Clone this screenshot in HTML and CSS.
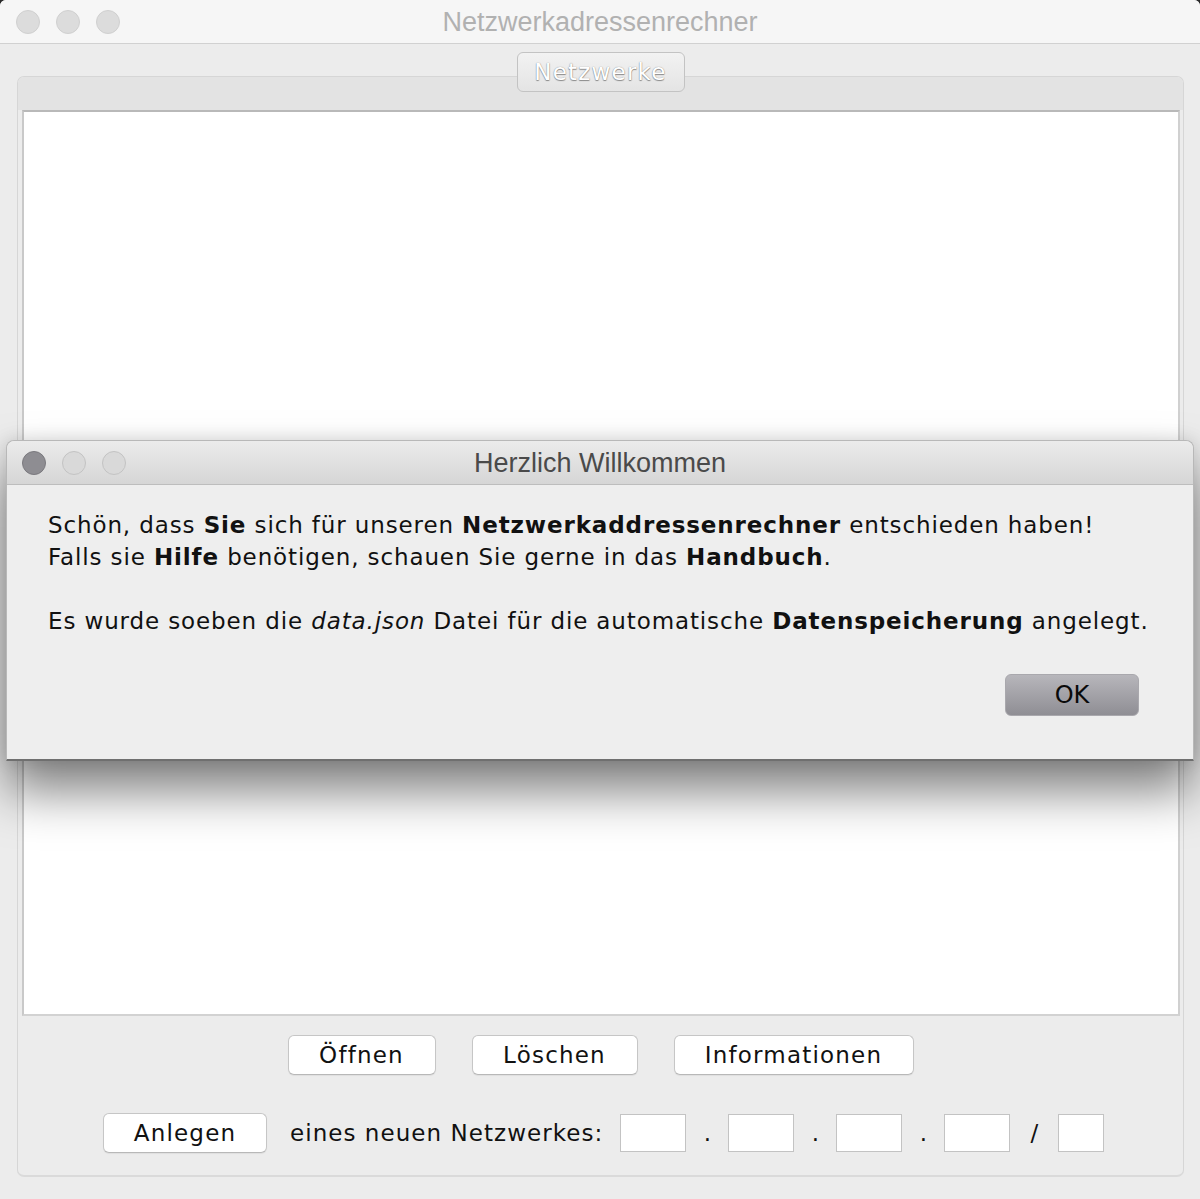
FILE: index.html
```html
<!DOCTYPE html>
<html lang="de">
<head>
<meta charset="utf-8">
<title>Netzwerkadressenrechner</title>
<link rel="stylesheet" href="styles.css">
</head>
<body>
<div class="window">
  <div class="titlebar">
    <div class="lights">
      <span class="light"></span><span class="light"></span><span class="light"></span>
    </div>
    <div class="title">Netzwerkadressenrechner</div>
  </div>
  <div class="main">
    <div class="tabs"><div class="tab">Netzwerke</div></div>
    <div class="panel">
      <div class="panel-head"></div>
      <div class="list"></div>
      <div class="controls">
        <div class="row row1">
          <button class="btn b-open">Öffnen</button>
          <button class="btn b-del">Löschen</button>
          <button class="btn b-info">Informationen</button>
        </div>
        <div class="row row2">
          <button class="btn b-add">Anlegen</button>
          <span class="label">eines neuen Netzwerkes:</span>
          <span class="field"></span><span class="sep">.</span>
          <span class="field"></span><span class="sep">.</span>
          <span class="field"></span><span class="sep">.</span>
          <span class="field"></span><span class="sep slash">/</span>
          <span class="field small"></span>
        </div>
      </div>
    </div>
  </div>
</div>

<div class="dialog">
  <div class="d-titlebar">
    <div class="lights d-lights">
      <span class="light dark"></span><span class="light"></span><span class="light"></span>
    </div>
    <div class="d-title">Herzlich Willkommen</div>
  </div>
  <div class="d-body">
    <p class="msg">Schön, dass <b>Sie</b> sich für unseren <b>Netzwerkaddressenrechner</b> entschieden haben!<br>Falls sie <b>Hilfe</b> benötigen, schauen Sie gerne in das <b>Handbuch</b>.</p>
    <p class="msg">Es wurde soeben die <i>data.json</i> Datei für die automatische <b>Datenspeicherung</b> angelegt.</p>
    <div class="d-actions"><button class="ok">OK</button></div>
  </div>
</div>
</body>
</html>
```

FILE: styles.css
```css
html, body {
  margin: 0;
  padding: 0;
}
html { background: #2a2a2a; }
body {
  width: 1200px;
  height: 1199px;
  overflow: hidden;
  position: relative;
  font-family: "DejaVu Sans", sans-serif;
}
.window {
  width: 1200px;
  height: 1199px;
  background: #ececec;
  border-radius: 6px 6px 0 0;
  overflow: hidden;
  display: flex;
  flex-direction: column;
}
.titlebar {
  height: 43px;
  flex: none;
  background: #f6f6f6;
  border-bottom: 1px solid #d1d1d1;
  display: grid;
  align-items: center;
}
.titlebar > * { grid-area: 1 / 1; }
.lights {
  display: flex;
  gap: 16px;
  padding-left: 16px;
  justify-self: start;
}
.light {
  width: 22px;
  height: 22px;
  border-radius: 50%;
  background: #dcdcdc;
  border: 1px solid #d0d0d0;
}
.title {
  justify-self: center;
  font-family: "Liberation Sans", Arial, sans-serif;
  font-size: 27px;
  color: #b1b1b1;
  padding-top: 2px;
}
.main {
  flex: 1;
  display: flex;
  flex-direction: column;
  padding: 8px 16px 22px 17px;
}
.tabs {
  display: flex;
  justify-content: center;
  margin-bottom: -16px;
  position: relative;
  z-index: 1;
}
.tab {
  width: 166px;
  height: 38px;
  box-sizing: content-box;
  border: 1px solid #c3c3c3;
  border-radius: 6px;
  background: linear-gradient(#f2f2f2, #e4e4e4);
  color: #ffffff;
  text-shadow: 0 1px 1px #8a8a8a, 0 0 1px #7a7a7a;
  font-family: "DejaVu Sans", sans-serif;
  font-size: 23px;
  letter-spacing: 1.2px;
  display: flex;
  align-items: center;
  justify-content: center;
}
.panel {
  flex: 1;
  border: 1px solid #d6d6d6;
  border-bottom-color: #dadada;
  border-bottom-width: 2px;
  border-radius: 7px;
  background: #ececec;
  display: flex;
  flex-direction: column;
  overflow: hidden;
}
.panel-head {
  height: 33px;
  flex: none;
  background: #e3e3e3;
}
.list {
  height: 902px;
  flex: none;
  margin: 0 3px 0 4px;
  background: #ffffff;
  border-top: 2px solid #b9b9b9;
  border-left: 2px solid #c9c9c9;
  border-right: 2px solid #d0d0d0;
  border-bottom: 2px solid #d2d2d2;
}
.controls {
  flex: 1;
  display: flex;
  flex-direction: column;
  padding-top: 19px;
  gap: 38px;
}
.row {
  display: flex;
  align-items: center;
  justify-content: center;
}
.row1 { gap: 36px; }
.btn {
  height: 40px;
  background: #ffffff;
  border: 1px solid #c6c6c6;
  border-bottom-color: #b8b8b8;
  border-radius: 6px;
  box-shadow: 0 1px 1px rgba(0,0,0,0.06);
  font-family: "DejaVu Sans", sans-serif;
  font-size: 23px;
  letter-spacing: 1.2px;
  color: #111111;
  padding: 0;
}
.b-open { width: 148px; }
.b-del { width: 166px; }
.b-info { width: 240px; }
.b-add { width: 164px; }
.row2 {
  justify-content: flex-start;
  padding-left: 85px;
}
.label {
  margin-left: 23px;
  margin-right: 17px;
  font-size: 23px;
  letter-spacing: 1.05px;
  color: #111111;
}
.field {
  width: 64px;
  height: 36px;
  background: #ffffff;
  border: 1px solid #c3c3c3;
}
.field.small { width: 44px; }
.sep {
  width: 42px;
  text-align: center;
  font-size: 23px;
  color: #111111;
}
.sep.slash { width: 48px; }

.dialog {
  position: absolute;
  left: 6px;
  top: 440px;
  width: 1186px;
  height: 318px;
  border: 1px solid #b8b8b8;
  border-bottom: 2px solid #6f6f6f;
  border-radius: 8px 8px 0 0;
  background: #eeeeee;
  box-shadow: 0 30px 50px rgba(0,0,0,0.5), 0 0 18px rgba(0,0,0,0.12);
  display: flex;
  flex-direction: column;
}
.d-titlebar {
  height: 43px;
  flex: none;
  border-radius: 8px 8px 0 0;
  background: linear-gradient(#ebebeb, #d6d6d6);
  border-bottom: 1px solid #bdbdbd;
  display: grid;
  align-items: center;
}
.d-titlebar > * { grid-area: 1 / 1; }
.d-lights { padding-left: 15px; }
.d-lights .light {
  background: #d9d9d9;
  border-color: #c3c3c3;
}
.d-lights .light.dark {
  background: #8e8d92;
  border-color: #7a797e;
}
.d-title {
  justify-self: center;
  font-family: "Liberation Sans", Arial, sans-serif;
  font-size: 27px;
  color: #4a4a4a;
  padding-top: 2px;
}
.d-body {
  flex: 1;
  padding: 24px 40px 0 41px;
  display: flex;
  flex-direction: column;
}
.msg {
  margin: 0 0 32px 0;
  font-size: 23px;
  line-height: 32px;
  letter-spacing: 0.88px;
  color: #111111;
  white-space: nowrap;
}
.msg:last-of-type { margin-bottom: 0; }
.d-actions {
  display: flex;
  justify-content: flex-end;
  margin-top: 37px;
  padding-right: 14px;
}
.ok {
  width: 134px;
  height: 42px;
  border: 1px solid #a9a8ad;
  border-radius: 6px;
  background: linear-gradient(#b7b6bb, #8f8e94);
  font-family: "DejaVu Sans", sans-serif;
  font-size: 24px;
  color: #0a0a0a;
  padding: 0;
}
```
